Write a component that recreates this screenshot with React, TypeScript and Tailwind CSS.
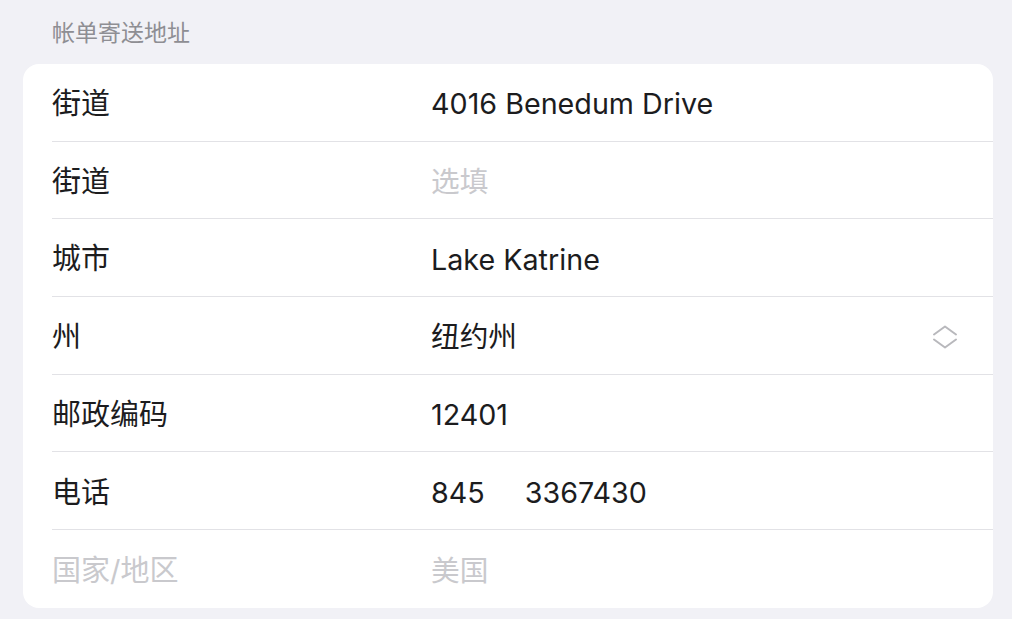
const FONT = "font-['Inter','Noto_Sans_CJK_SC',sans-serif]";

type Row = {
    label: string;
    value: string;
    placeholder?: boolean;
    muted?: boolean;
    chevron?: boolean;
    phone?: [string, string];
};

const rows: Row[] = [
    { label: '街道', value: '4016 Benedum Drive' },
    { label: '街道', value: '选填', placeholder: true },
    { label: '城市', value: 'Lake Katrine' },
    { label: '州', value: '纽约州', chevron: true },
    { label: '邮政编码', value: '12401' },
    { label: '电话', value: '', phone: ['845', '3367430'] },
    { label: '国家/地区', value: '美国', muted: true },
];

function UpDownIcon() {
    return (
        <svg width="26" height="26" viewBox="0 0 26 26" fill="none">
            <path
                d="M2 10.5 L13 2.5 L24 10.5"
                stroke="#b8b8bc"
                strokeWidth="2"
                strokeLinecap="round"
                strokeLinejoin="round"
            />
            <path
                d="M2 15.5 L13 23.5 L24 15.5"
                stroke="#b8b8bc"
                strokeWidth="2"
                strokeLinecap="round"
                strokeLinejoin="round"
            />
        </svg>
    );
}

function App() {
    return (
        <div className={`w-[1012px] h-[619px] bg-[#f1f1f6] ${FONT} overflow-hidden`}>
            <div className="pl-[52px] pt-[17px] h-[64px] text-[23px] text-[#8e8e93] leading-[32px]">
                帐单寄送地址
            </div>
            <div className="ml-[23px] mr-[19px] bg-white rounded-[16px] pl-[29px]">
                {rows.map((row, i) => (
                    <div
                        key={i}
                        className={`flex items-center h-[77.7px] pt-[3px] pr-[35px] ${
                            i < rows.length - 1 ? 'border-b-[1.5px] border-[#e2e2e6]' : ''
                        }`}
                    >
                        <div
                            className={`w-[379px] text-[29px] ${
                                row.muted ? 'text-[#c9c9cd]' : 'text-[#1c1c1e]'
                            }`}
                        >
                            {row.label}
                        </div>
                        <div
                            className={`flex-1 text-[28.7px] ${
                                row.placeholder || row.muted ? 'text-[#c9c9cd]' : 'text-[#1c1c1e]'
                            }`}
                        >
                            {row.phone ? (
                                <span className="flex gap-[40px]">
                                    <span>{row.phone[0]}</span>
                                    <span>{row.phone[1]}</span>
                                </span>
                            ) : (
                                row.value
                            )}
                        </div>
                        {row.chevron ? <UpDownIcon /> : null}
                    </div>
                ))}
            </div>
        </div>
    );
}

export default App;
